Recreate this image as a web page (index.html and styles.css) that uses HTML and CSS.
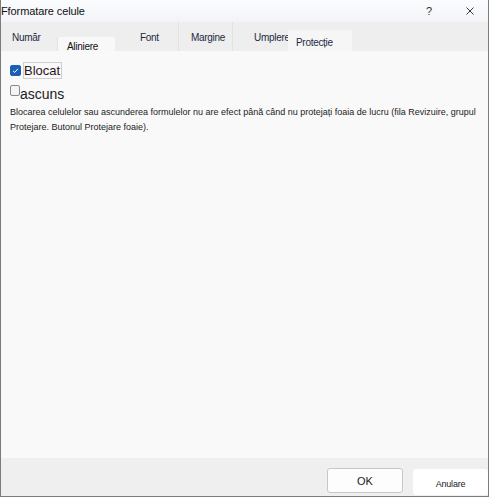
FILE: index.html
```html
<!DOCTYPE html>
<html lang="ro">
<head>
  <meta charset="UTF-8">
  <title>Formatare celule</title>
  <link rel="stylesheet" href="styles.css">
</head>
<body>
 <div class="window">
  <div class="titlebar">
    <span class="title">Fformatare celule</span>
    <span class="help">?</span>
    <span class="close">
      <svg width="8" height="8" viewBox="0 0 8 8"><path d="M0.5 0.5L7.5 7.5M7.5 0.5L0.5 7.5" stroke="#3a3a3a" stroke-width="1"/></svg>
    </span>
  </div>
  <ul class="tabs">
    <li class="t-numar">Număr</li>
    <li class="t-aliniere">Aliniere</li>
    <li class="t-font">Font</li>
    <li class="t-margine">Margine</li>
    <li class="t-umplere">Umplere</li>
    <li class="t-protectie">Protecție</li>
  </ul>
  <div class="content">
    <div class="row row-blocat">
      <span class="box checked">
        <svg width="11" height="11" viewBox="0 0 11 11"><path d="M3 5.8L4.7 7.4L8 3.8" fill="none" stroke="#fff" stroke-width="1"/></svg>
      </span>
      <span class="label focus">Blocat</span>
    </div>
    <div class="row row-ascuns">
      <span class="box"></span>
      <span class="label">ascuns</span>
    </div>
    <p class="desc">Blocarea celulelor sau ascunderea formulelor nu are efect până când nu protejați foaia de lucru (fila Revizuire, grupul Protejare. Butonul Protejare foaie).</p>
  </div>
  <div class="footer">
    <button class="btn ok">OK</button>
    <button class="btn cancel">Anulare</button>
  </div>
 </div>
</body>
</html>
```
FILE: styles.css
```css
*{margin:0;padding:0;box-sizing:border-box;}
body{background:#fff;font-family:"Liberation Sans",Arial,sans-serif;color:#1b1b1b;}
.window{
  width:489px;
  height:497px;
  border-left:1px solid #7c7c7c;
  border-right:1px solid #7c7c7c;
  border-bottom:1px solid #7c7c7c;
  display:flex;
  flex-direction:column;
  background:#f9f9f9;
}
.titlebar{
  height:22px;
  display:flex;
  align-items:center;
  background:linear-gradient(#fbfcfe,#f2f4f8);
  font-size:11px;
}
.title{flex:1;letter-spacing:-0.1px;color:#111;}
.help{width:12px;color:#333;margin-right:28px;font-size:11px;}
.close{width:22px;display:flex;align-items:center;margin-top:-1px;}

.tabs{
  height:29px;
  display:flex;
  list-style:none;
  background:#eeeeee;
  font-size:10px;
  letter-spacing:-0.3px;
  color:#1d2a44;
}
.tabs li{display:flex;align-items:center;padding-top:1px;height:100%;}
.t-numar{width:56px;padding-left:11px;}
.t-aliniere{width:58px;padding-left:9px;align-self:flex-end;height:14px !important;background:#f8f8f8;border-left:1px solid #e2e2e2;padding-top:4px !important;color:#111;}
.t-font{width:63px;padding-left:25px;}
.t-margine{width:54px;padding-left:12px;border-left:1px solid #e2e2e2;}
.t-umplere{width:56px;padding-left:21px;border-left:1px solid #e2e2e2;}
.t-protectie{width:64px;padding-left:8px;align-self:flex-end;height:21px !important;background:#f6f6f6;padding-top:3px !important;}

.content{flex:1;padding:11px 0 0 9px;background:#f9f9f9;}
.row{display:flex;font-size:13px;}
.box{
  width:11px;
  height:11px;
  border:1px solid #8a8a8a;
  border-radius:2px;
  background:#f4f4f4;
}
.box.checked{background:#1a5fb6;border-color:#1a5fb6;}
.box.checked svg{display:block;margin:-1px 0 0 -1px;}
.row-blocat{align-items:center;height:17px;}
.row-blocat .box{margin-right:2px;}
.label.focus{border:1px solid #cfcfcf;padding:0 1px 0 0;line-height:15px;color:#2a1520;}
.row-ascuns{margin-top:6px;align-items:flex-start;height:17px;}
.row-ascuns .box{width:10px;height:11px;}
.row-ascuns .label{font-size:14px;line-height:16px;margin-top:1px;}
.desc{
  margin-top:3px;
  font-size:9px;
  line-height:15px;
  letter-spacing:0;
  color:#222;
  width:466px;
}

.footer{
  height:38px;
  background:#efefef;
  display:flex;
  justify-content:flex-end;
  align-items:flex-start;
  padding-top:10px;
  gap:10px;
}
.btn{font-family:"Liberation Sans",Arial,sans-serif;color:#1b1b1b;border-radius:3px;}
.ok{width:76px;height:25px;border:1px solid #c8c8c8;background:#fdfdfd;font-size:11px;}
.cancel{width:75px;height:26px;margin-top:1px;border:none;background:#fff;font-size:9px;letter-spacing:-0.2px;padding-top:4px;}
```
